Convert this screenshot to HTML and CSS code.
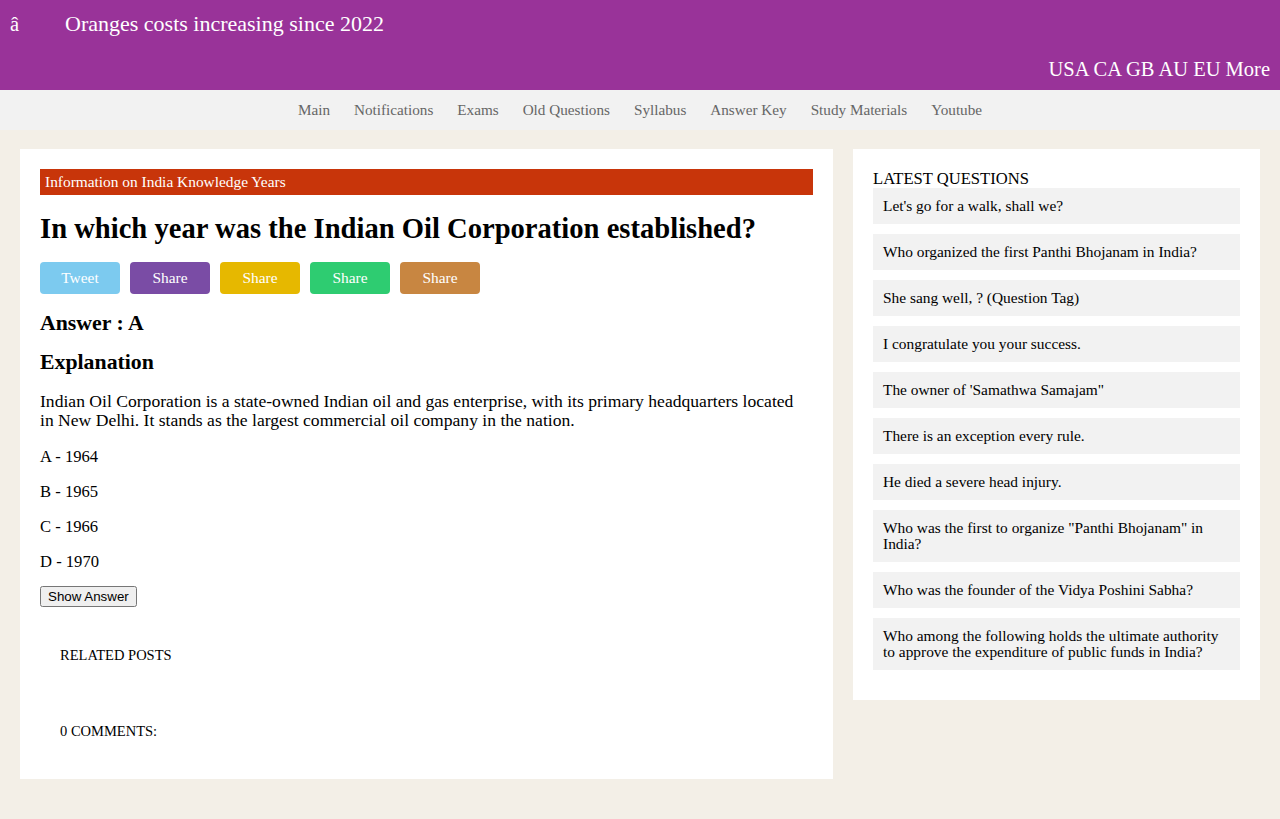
FILE: index.html
```html
<!DOCTYPE html>
<html lang="en">
<head>
<meta charset="utf-8">
<title>In which year was the Indian Oil Corporation established?</title>
<link rel="stylesheet" href="styles.css">
</head>
<body>
<header class="top">
  <div class="top-row">
    <span class="top-icon">â</span>
    <span class="top-title">Oranges costs increasing since 2022</span>
  </div>
  <div class="top-links">USA CA GB AU EU More</div>
</header>
<nav class="nav">
  <a>Main</a>
  <a>Notifications</a>
  <a>Exams</a>
  <a>Old Questions</a>
  <a>Syllabus</a>
  <a>Answer Key</a>
  <a>Study Materials</a>
  <a>Youtube</a>
</nav>
<div class="page">
  <main class="post">
    <div class="label">Information on India Knowledge Years</div>
    <h1 class="post-title">In which year was the Indian Oil Corporation established?</h1>
    <div class="share">
      <span class="btn tw">Tweet</span>
      <span class="btn fb">Share</span>
      <span class="btn yl">Share</span>
      <span class="btn gr">Share</span>
      <span class="btn br">Share</span>
    </div>
    <h3 class="sub">Answer : A</h3>
    <h3 class="sub">Explanation</h3>
    <p class="text">Indian Oil Corporation is a state-owned Indian oil and gas enterprise, with its primary headquarters located in New Delhi. It stands as the largest commercial oil company in the nation.</p>
    <p class="text opt">A - 1964</p>
    <p class="text opt">B - 1965</p>
    <p class="text opt">C - 1966</p>
    <p class="text opt">D - 1970</p>
    <button class="show">Show Answer</button>
    <div class="extra">RELATED POSTS</div>
    <div class="extra comments">0 COMMENTS:</div>
  </main>
  <aside class="side">
    <div class="side-title">LATEST QUESTIONS</div>
    <ul class="qlist">
      <li>Let's go for a walk, shall we?</li>
      <li>Who organized the first Panthi Bhojanam in India?</li>
      <li>She sang well, ? (Question Tag)</li>
      <li>I congratulate you your success.</li>
      <li>The owner of 'Samathwa Samajam"</li>
      <li>There is an exception every rule.</li>
      <li>He died a severe head injury.</li>
      <li>Who was the first to organize "Panthi Bhojanam" in India?</li>
      <li>Who was the founder of the Vidya Poshini Sabha?</li>
      <li>Who among the following holds the ultimate authority to approve the expenditure of public funds in India?</li>
    </ul>
  </aside>
</div>
</body>
</html>
```
FILE: styles.css
```css
html, body {
  margin: 0;
  padding: 0;
}
body {
  background: #f3efe7;
  font-family: "Liberation Serif", "DejaVu Serif", serif;
  color: #000;
}
.top {
  background: #993399;
  color: #fff;
  height: 90px;
  padding: 0 10px;
  box-sizing: border-box;
  font-size: 20.5px;
}
.top-row {
  display: flex;
  align-items: center;
  height: 48px;
}
.top-icon {
  width: 55px;
}
.top-title {
  font-size: 22px;
}
.top-links {
  text-align: right;
  line-height: 42px;
}
.nav {
  background: #f2f2f2;
  height: 40px;
  display: flex;
  justify-content: center;
  align-items: center;
  gap: 24px;
  font-size: 15.2px;
  color: #666;
}
.page {
  display: flex;
  align-items: flex-start;
  gap: 20px;
  padding: 19px 20px 40px;
}
.post {
  background: #fff;
  width: 813px;
  box-sizing: border-box;
  padding: 20px;
}
.label {
  background: #c8350a;
  color: #fff;
  font-size: 15.4px;
  height: 26px;
  line-height: 26px;
  padding: 0 5px;
}
.post-title {
  font-size: 28.6px;
  font-weight: bold;
  margin: 18px 0 17px;
  line-height: 32px;
}
.share {
  display: flex;
  gap: 10px;
}
.btn {
  width: 80px;
  height: 32px;
  border-radius: 4px;
  color: #fff;
  font-size: 15.4px;
  display: flex;
  align-items: center;
  justify-content: center;
}
.tw { background: #7ccaef; }
.fb { background: #7a4ca5; }
.yl { background: #e6b800; }
.gr { background: #2ecc71; }
.br { background: #c88641; }
.sub {
  font-size: 21.8px;
  font-weight: bold;
  margin: 18px 0 0;
  line-height: 22px;
}
.sub + .sub {
  margin-top: 17px;
}
.text {
  font-size: 17.6px;
  line-height: 19px;
  margin: 16px 0 0;
  padding-right: 12px;
}
.sub + .text {
  margin-top: 19px;
}
.opt {
  font-size: 16.6px;
  margin-top: 16px;
}
.text + .opt {
  margin-top: 17px;
}
.opt + .opt {
  margin-top: 16px;
}
.show {
  margin-top: 15px;
  font-family: "Liberation Sans", Arial, sans-serif;
  font-size: 13.33px;
  padding: 1px 6px;
  height: 21px;
}
.extra {
  font-size: 14.5px;
  padding: 0 20px;
  margin-top: 40px;
}
.comments {
  margin-top: 59px;
  margin-bottom: 19px;
}
.side {
  background: #fff;
  width: 407px;
  box-sizing: border-box;
  padding: 20px 20px 30px;
}
.side-title {
  font-size: 16.6px;
  line-height: 19px;
}
.qlist {
  list-style: none;
  margin: 0;
  padding: 0;
  display: flex;
  flex-direction: column;
  gap: 10px;
}
.qlist li {
  background: #f2f2f2;
  font-size: 15.4px;
  line-height: 16px;
  padding: 10px;
}
```
